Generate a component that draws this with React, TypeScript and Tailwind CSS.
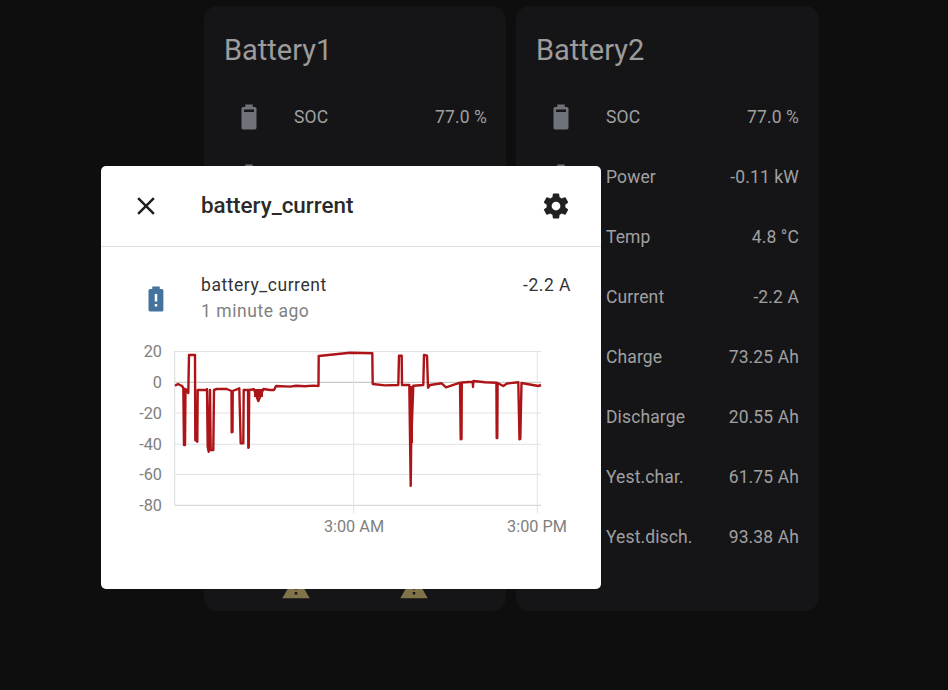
const batteryPath =
  "M16,8H8V6H16M16.67,4H15V2H9V4H7.33A1.33,1.33 0 0,0 6,5.33V20.67C6,21.4 6.6,22 7.33,22H16.67A1.33,1.33 0 0,0 18,20.67V5.33C18,4.6 17.4,4 16.67,4Z";
const batteryAlertPath =
  "M13 14H11V8H13M13 18H11V16H13M16.7 4H15V2H9V4H7.3C6.6 4 6 4.6 6 5.3V20.6C6 21.4 6.6 22 7.3 22H16.6C17.3 22 17.9 21.4 17.9 20.7V5.3C18 4.6 17.4 4 16.7 4Z";
const alertPath = "M13 14H11V10H13M13 18H11V16H13M1 21H23L12 2L1 21Z";
const closePath =
  "M19,6.41L17.59,5L12,10.59L6.41,5L5,6.41L10.59,12L5,17.59L6.41,19L12,13.41L17.59,19L19,17.59L13.41,12L19,6.41Z";
const cogPath =
  "M12,15.5A3.5,3.5 0 0,1 8.5,12A3.5,3.5 0 0,1 12,8.5A3.5,3.5 0 0,1 15.5,12A3.5,3.5 0 0,1 12,15.5M19.43,12.97C19.47,12.65 19.5,12.33 19.5,12C19.5,11.67 19.47,11.34 19.43,11L21.54,9.37C21.73,9.22 21.78,8.95 21.66,8.73L19.66,5.27C19.54,5.05 19.27,4.96 19.05,5.05L16.56,6.05C16.04,5.66 15.5,5.32 14.87,5.07L14.5,2.42C14.46,2.18 14.25,2 14,2H10C9.75,2 9.54,2.18 9.5,2.42L9.13,5.07C8.5,5.32 7.96,5.66 7.44,6.05L4.95,5.05C4.73,4.96 4.46,5.05 4.34,5.27L2.34,8.73C2.21,8.95 2.27,9.22 2.46,9.37L4.57,11C4.53,11.34 4.5,11.67 4.5,12C4.5,12.33 4.53,12.65 4.57,12.97L2.46,14.63C2.27,14.78 2.21,15.05 2.34,15.27L4.34,18.73C4.46,18.95 4.73,19.03 4.95,18.94L7.44,17.94C7.96,18.34 8.5,18.68 9.13,18.93L9.5,21.58C9.54,21.82 9.75,22 10,22H14C14.25,22 14.46,21.82 14.5,21.58L14.87,18.93C15.5,18.67 16.04,18.34 16.56,17.94L19.05,18.95C19.27,19.03 19.54,18.95 19.66,18.73L21.66,15.27C21.78,15.05 21.73,14.78 21.54,14.63L19.43,12.97Z";

function Mdi({ d, className }: { d: string; className?: string }) {
  return (
    <svg viewBox="0 0 24 24" className={className} fill="currentColor">
      <path d={d} />
    </svg>
  );
}

const rows = [
  { label: "SOC", value: "77.0 %" },
  { label: "Power", value: "-0.11 kW" },
  { label: "Temp", value: "4.8 °C" },
  { label: "Current", value: "-2.2 A" },
  { label: "Charge", value: "73.25 Ah" },
  { label: "Discharge", value: "20.55 Ah" },
  { label: "Yest.char.", value: "61.75 Ah" },
  { label: "Yest.disch.", value: "93.38 Ah" },
];

function BatteryCard({ title, warnings, className }: { title: string; warnings?: boolean; className?: string }) {
  return (
    <div className={`h-[605px] rounded-[14px] bg-[#151517] pl-[20px] ${className ?? ""}`}>
      <div className="h-[81px] flex items-center text-[29px] text-[#9c9c9c] pt-[8px]">{title}</div>
      {rows.map((row) => (
        <div key={row.label} className="h-[60px] flex items-center text-[#a0a0a0] text-[17.5px] tracking-[0.12px]">
          <Mdi d={batteryPath} className="w-[30px] h-[30px] ml-[10px] text-[#6f7278] shrink-0" />
          <span className="ml-[30px] flex-1 pt-[1px]">{row.label}</span>
          <span className="pt-[1px]">{row.value}</span>
        </div>
      ))}
      {warnings && (
        <div className="flex justify-center gap-[88px] mt-[5px] pr-[1px]">
          <Mdi d={alertPath} className="w-[30px] h-[30px] text-[#80734a]" />
          <Mdi d={alertPath} className="w-[30px] h-[30px] text-[#80734a]" />
        </div>
      )}
    </div>
  );
}

// page coordinates, the svg below uses the same numbers in its viewBox
const trace =
  "M175,385.7 L178,384 L182,386 L183.3,388 L184,445 L185,445 L185.5,389 L188.3,393 L189,355 L195,355 L195.3,440 L197.3,441.7 L197.7,390 L206,390 L207,389 L207.7,446.7 L208.7,451.7 L210,390 L210.7,450 L213.3,450 L214,390 L216.7,389 L226.7,389 L231.5,391 L231.7,432.3 L232.5,432 L232.7,391 L239.3,388.3 L240.7,443.3 L243.3,443.3 L243.7,390 L248,390 L248.3,447.7 L248.8,447 L249.2,390 L254,389.3 L258.3,401 L263.3,389 L270,390 L274,390 L276,386 L290,386.6 L296,385.8 L305,386.3 L313,385.6 L318.5,386 L318.7,356 L350,352.7 L372.3,353.3 L372.7,384 L385,385.4 L398.3,385 L399,355.7 L401.7,355.7 L402,385 L409.3,385 L410.7,485.7 L411.2,442.7 L413.3,385.7 L423.3,385 L424,355 L427,355.7 L428,387.7 L430,385 L441.7,383.3 L446,387.3 L460,382.7 L460.7,439.3 L461.5,439 L461.8,382.5 L472.7,381.7 L473,387 L473.4,381 L485,382.2 L496.4,382.7 L496.7,438 L497.3,438 L497.6,383 L503.3,386 L507,383.5 L518.3,382.3 L519.5,439.3 L520.3,439 L521.5,383 L530,384.5 L538.3,386 L541,385";

function HistoryChart() {
  const gridY = [351.5, 413, 444.3, 474.3];
  const labels = [
    { y: 351.5, text: "20" },
    { y: 382.3, text: "0" },
    { y: 413, text: "-20" },
    { y: 444.3, text: "-40" },
    { y: 474.3, text: "-60" },
    { y: 505.3, text: "-80" },
  ];
  return (
    <svg viewBox="101 340 500 220" className="block w-[500px] h-[220px]">
      {gridY.map((y) => (
        <line key={y} x1="175" x2="541" y1={y} y2={y} stroke="#e2e2e2" strokeWidth="1" />
      ))}
      <line x1="175" x2="541" y1="382.3" y2="382.3" stroke="#bdbdbd" strokeWidth="1" />
      <line x1="175" x2="541" y1="505.3" y2="505.3" stroke="#cfcfcf" strokeWidth="1" />
      <line x1="174.7" x2="174.7" y1="351" y2="505.5" stroke="#dcdcdc" strokeWidth="1" />
      <line x1="353.7" x2="353.7" y1="351" y2="513" stroke="#e2e2e2" strokeWidth="1" />
      <line x1="537.3" x2="537.3" y1="351" y2="513" stroke="#e2e2e2" strokeWidth="1" />
      {labels.map((l) => (
        <text key={l.text} x="162" y={l.y + 5.5} textAnchor="end" fill="#808080" className="text-[16.25px] font-['Roboto',sans-serif]">
          {l.text}
        </text>
      ))}
      <text x="354" y="532" textAnchor="middle" fill="#808080" className="text-[16.25px] font-['Roboto',sans-serif]">
        3:00 AM
      </text>
      <text x="537" y="532" textAnchor="middle" fill="#808080" className="text-[16.25px] font-['Roboto',sans-serif]">
        3:00 PM
      </text>
      <path d={trace} fill="none" stroke="#ad1418" strokeWidth="2.4" strokeLinejoin="round" />
      <rect x="254" y="389" width="9" height="8" fill="#ad1418" />
      <rect x="409.5" y="386" width="3.5" height="57" fill="#ad1418" />
    </svg>
  );
}

export default function App() {
  return (
    <div className="relative h-[690px] w-[948px] overflow-hidden bg-[#0e0e0e] font-['Roboto',sans-serif]">
      <div className="flex gap-[10px] pl-[204px] pt-[6px]">
        <BatteryCard title="Battery1" warnings className="w-[302px] pr-[19px]" />
        <BatteryCard title="Battery2" className="w-[303px] pr-[20px]" />
      </div>

      <div className="absolute left-[101px] top-[166px] w-[500px] h-[423px] rounded-[5px] bg-white overflow-hidden">
        <div className="h-[81px] flex items-center border-b border-[#e0e0e0] pl-[30px] pr-[30px]">
          <Mdi d={closePath} className="w-[30px] h-[30px] text-[#212121]" />
          <span className="ml-[40px] flex-1 text-[22.4px] font-medium text-[#2a2a2a]">battery_current</span>
          <Mdi d={cogPath} className="w-[30px] h-[30px] text-[#212121]" />
        </div>
        <div className="h-[93px] flex pl-[40px] pr-[30px] pt-[25px]">
          <Mdi d={batteryAlertPath} className="w-[30px] h-[30px] mt-[12px] text-[#44739e] shrink-0" />
          <div className="ml-[30px] flex-1 text-[17.5px] leading-[26px] tracking-[0.55px]">
            <div className="text-[#333333]">battery_current</div>
            <div className="text-[#808080]">1 minute ago</div>
          </div>
          <div className="text-[17.5px] leading-[26px] tracking-[0.5px] text-[#333333]">-2.2 A</div>
        </div>
        <HistoryChart />
      </div>
    </div>
  );
}
